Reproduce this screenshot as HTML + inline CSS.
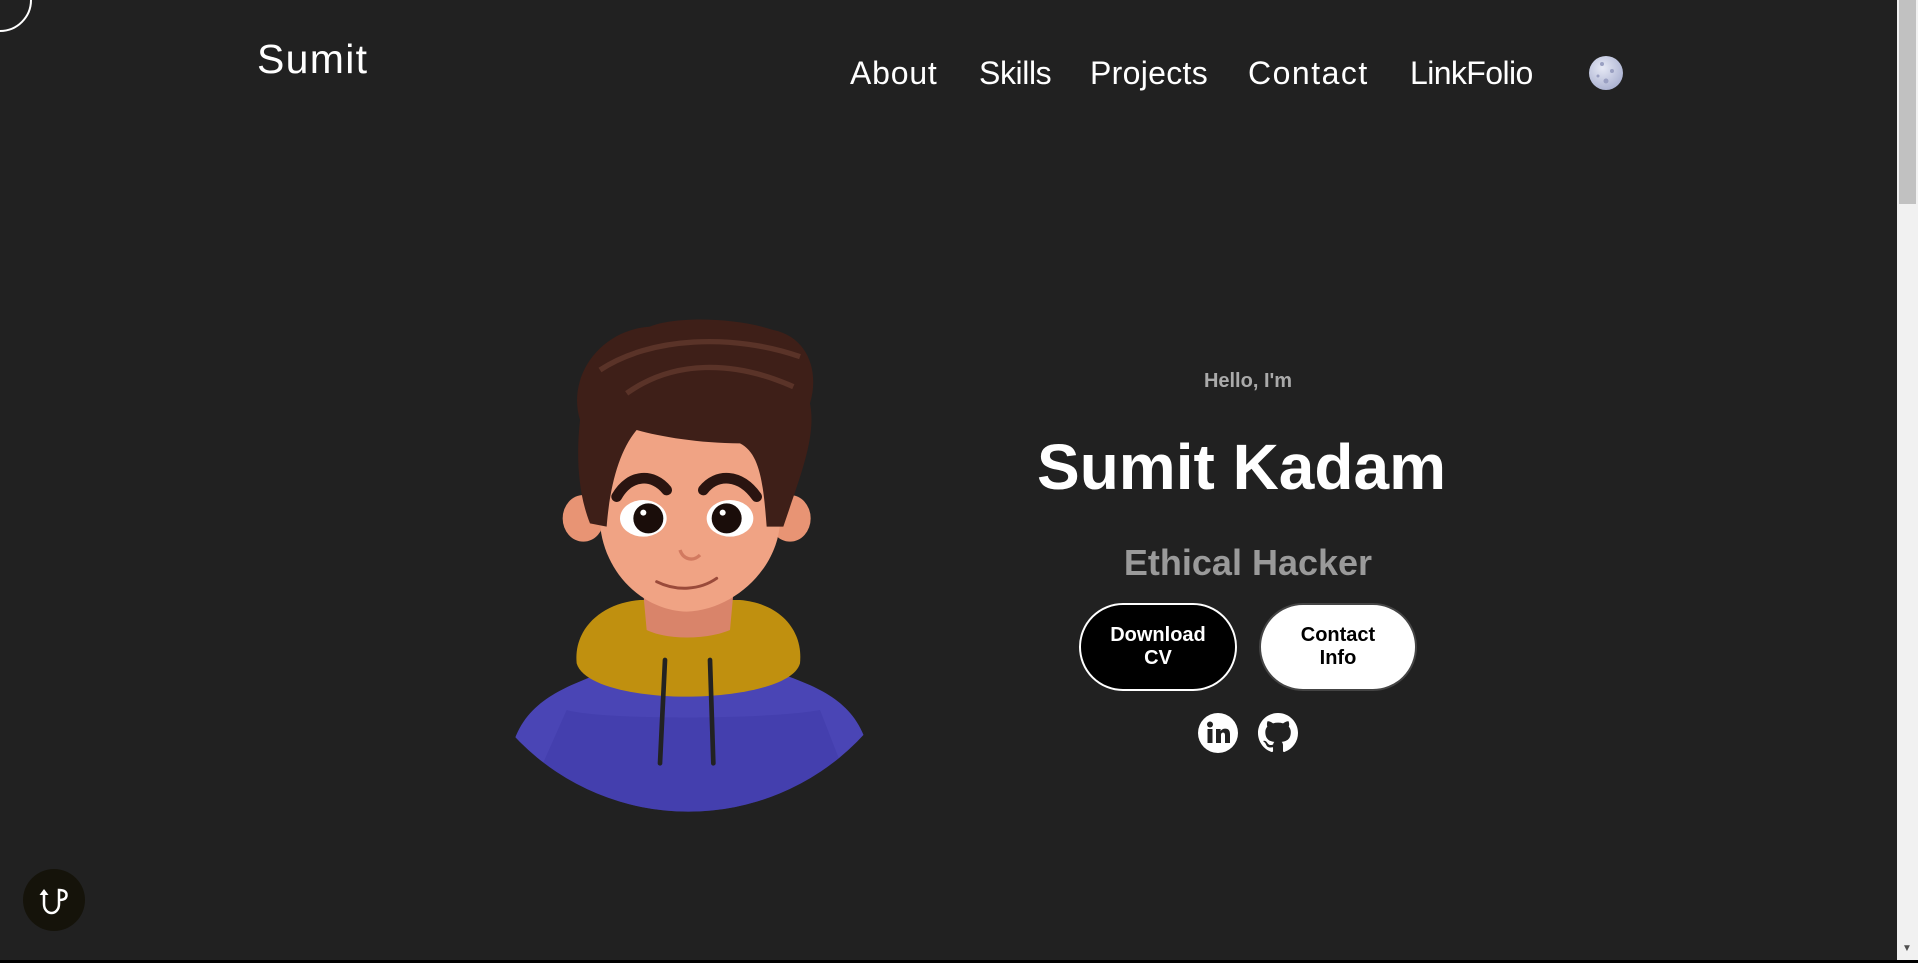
<!DOCTYPE html>
<html><head><meta charset="utf-8"><style>
html,body{margin:0;padding:0}
body{width:1918px;height:963px;background:#212121;position:relative;overflow:hidden;font-family:"Liberation Sans",sans-serif;color:#fff}
.a{position:absolute;white-space:nowrap}
.nav{font-size:32px;top:54px;line-height:38px;letter-spacing:.3px}
.btn{position:absolute;top:603px;width:158px;height:88px;border-radius:44px;box-sizing:border-box;display:flex;align-items:center;justify-content:center;text-align:center;font-weight:bold;font-size:20px;line-height:23px}
</style></head><body>
<svg class="a" style="left:0;top:0" width="40" height="40"><circle cx="0" cy="0" r="31" fill="none" stroke="#fff" stroke-width="2"/></svg>
<div class="a" style="left:257px;top:36px;font-size:41px;line-height:46px;letter-spacing:1.3px">Sumit</div>
<div class="a nav" style="left:850px;letter-spacing:.8px">About</div>
<div class="a nav" style="left:979px;letter-spacing:-.4px">Skills</div>
<div class="a nav" style="left:1090px">Projects</div>
<div class="a nav" style="left:1248px;letter-spacing:1.5px">Contact</div>
<div class="a nav" style="left:1410px;letter-spacing:-.6px">LinkFolio</div>
<svg class="a" style="left:1588px;top:56px" width="36" height="36"><defs><radialGradient id="mg" cx="40%" cy="35%" r="70%"><stop offset="0" stop-color="#e6e9f5"/><stop offset="1" stop-color="#a9b0d0"/></radialGradient></defs><circle cx="18" cy="17" r="17" fill="url(#mg)"/><circle cx="14" cy="8" r="2" fill="#9aa0c2"/><circle cx="24" cy="15" r="2" fill="#9aa0c2"/><circle cx="18" cy="25" r="2.5" fill="#9aa0c2"/><circle cx="10" cy="20" r="1.5" fill="#9aa0c2"/></svg>

<svg class="a" style="left:500px;top:310px" width="380" height="520" viewBox="0 0 1140 1560">
<defs><clipPath id="cc"><circle cx="565" cy="790" r="715"/></clipPath></defs>
<g clip-path="url(#cc)">
<path d="M40,1300 C80,1170 200,1130 300,1090 L840,1090 C950,1130 1060,1170 1100,1300 L1100,1560 L40,1560 Z" fill="#4a45b5"/>
<path d="M200,1200 C300,1230 800,1230 960,1200 L1100,1560 L40,1560 Z" fill="#3e3aa8" opacity=".5"/>
</g>
<path d="M230,1060 C220,960 300,880 420,870 L720,870 C840,880 910,960 900,1060 C880,1130 700,1160 560,1160 C420,1160 250,1130 230,1060 Z" fill="#c0900f"/>
<path d="M430,850 L700,850 L690,960 C620,990 500,990 440,960 Z" fill="#d9846a"/>
<ellipse cx="250" cy="625" rx="62" ry="70" fill="#e89474"/>
<ellipse cx="870" cy="625" rx="62" ry="70" fill="#e89474"/>
<path d="M300,420 C300,300 820,300 830,420 L840,640 C830,780 700,900 560,905 C420,900 310,780 300,640 Z" fill="#f0a384"/>
<path d="M240,330 C200,200 300,60 450,50 C520,20 700,20 820,60 C920,80 960,180 930,280 C950,380 900,500 850,650 L800,650 C790,520 780,430 720,400 C600,400 480,380 410,360 C360,420 330,520 320,650 L270,640 C230,540 230,420 240,330 Z" fill="#3e1f18"/>
<path d="M300,180 C450,80 700,70 900,140 M380,250 C520,150 700,150 880,230" stroke="#5a3328" stroke-width="16" fill="none"/>
<path d="M350,560 C390,490 460,490 500,540" stroke="#2a1410" stroke-width="32" fill="none" stroke-linecap="round"/>
<path d="M610,540 C650,490 720,490 770,560" stroke="#2a1410" stroke-width="32" fill="none" stroke-linecap="round"/>
<ellipse cx="430" cy="625" rx="70" ry="55" fill="#fff"/><circle cx="445" cy="625" r="45" fill="#1a0d0a"/><circle cx="430" cy="608" r="9" fill="#fff"/>
<ellipse cx="690" cy="625" rx="70" ry="55" fill="#fff"/><circle cx="680" cy="625" r="45" fill="#1a0d0a"/><circle cx="668" cy="608" r="9" fill="#fff"/>
<path d="M540,720 C550,750 580,755 600,735" stroke="#d27a60" stroke-width="10" fill="none"/>
<path d="M470,815 C530,845 600,840 650,805" stroke="#9a4a3a" stroke-width="9" fill="none" stroke-linecap="round"/>
<path d="M495,1050 L480,1360 M630,1050 L640,1360" stroke="#222" stroke-width="14" stroke-linecap="round"/>
</svg>

<div class="a" style="left:1148px;width:200px;text-align:center;top:369px;font-size:20px;line-height:24px;font-weight:bold;color:#aaa">Hello, I'm</div>
<div class="a" style="left:1037px;width:400px;text-align:center;top:429px;font-size:64px;line-height:76px;font-weight:bold;color:#fff">Sumit Kadam</div>
<div class="a" style="left:1048px;width:400px;text-align:center;top:541px;font-size:36px;line-height:44px;font-weight:bold;color:#9a9a9a">Ethical Hacker</div>
<div class="btn" style="left:1079px;background:#000;border:2px solid #fff;color:#fff">Download<br>CV</div>
<div class="btn" style="left:1259px;background:#fff;border:2px solid #444;color:#000">Contact<br>Info</div>
<svg class="a" style="left:1198px;top:713px" width="40" height="40" viewBox="0 0 40 40"><circle cx="20" cy="20" r="20" fill="#fff"/><rect x="9.5" y="16" width="5" height="14" fill="#212121"/><circle cx="12" cy="11.5" r="3" fill="#212121"/><path d="M18 16h4.6v2c1-1.6 2.6-2.4 4.6-2.4 3.6 0 4.8 2.3 4.8 5.8V30h-5v-7.6c0-1.8-.5-2.8-2-2.8-1.6 0-2 1.2-2 2.8V30h-5z" fill="#212121"/></svg>
<svg class="a" style="left:1258px;top:713px" width="40" height="40" viewBox="0 0 16 16"><path fill="#fff" d="M8 0C3.58 0 0 3.58 0 8c0 3.540 2.29 6.53 5.47 7.59.4.07.55-.17.55-.38 0-.19-.01-.82-.01-1.49-2.01.37-2.53-.49-2.690-.94-.09-.23-.48-.94-.82-1.13-.28-.15-.68-.52-.01-.53.63-.01 1.08.58 1.23.82.72 1.21 1.87.87 2.33.66.07-.52.28-.87.51-1.07-1.78-.2-3.64-.89-3.64-3.95 0-.87.31-1.59.82-2.15-.08-.2-.36-1.02.08-2.12 0 0 .67-.21 2.2.82.64-.18 1.32-.27 2-.27.68 0 1.36.09 2 .27 1.53-1.04 2.2-.82 2.2-.82.44 1.1.16 1.92.08 2.12.51.56.82 1.27.82 2.15 0 3.07-1.87 3.75-3.65 3.95.29.25.54.73.54 1.48 0 1.07-.01 1.93-.01 2.2 0 .21.15.46.55.38A8.013 8.013 0 0016 8c0-4.42-3.58-8-8-8z"/></svg>

<svg class="a" style="left:22px;top:868px" width="64" height="64" viewBox="0 0 64 64"><circle cx="32" cy="32" r="31" fill="#15130a"/><path d="M22 24v12c0 6 4 9 7.5 9s7.5-3 7.5-9V22c4 0 7.5 1 7.5 5s-3.5 5-7.5 5" stroke="#fff" stroke-width="2.5" fill="none"/><path d="M17.5 27l4.5-6 4.5 6z" fill="#fff"/></svg>

<div class="a" style="left:1897px;top:0;width:21px;height:963px;background:#f1f1f1"></div>
<div class="a" style="left:1899px;top:0;width:17px;height:204px;background:#c1c1c1"></div>
<div class="a" style="left:1902px;top:943px;font-size:10px;color:#505050">▼</div>
<div class="a" style="left:0;top:960px;width:1918px;height:3px;background:#000"></div>
</body></html>
